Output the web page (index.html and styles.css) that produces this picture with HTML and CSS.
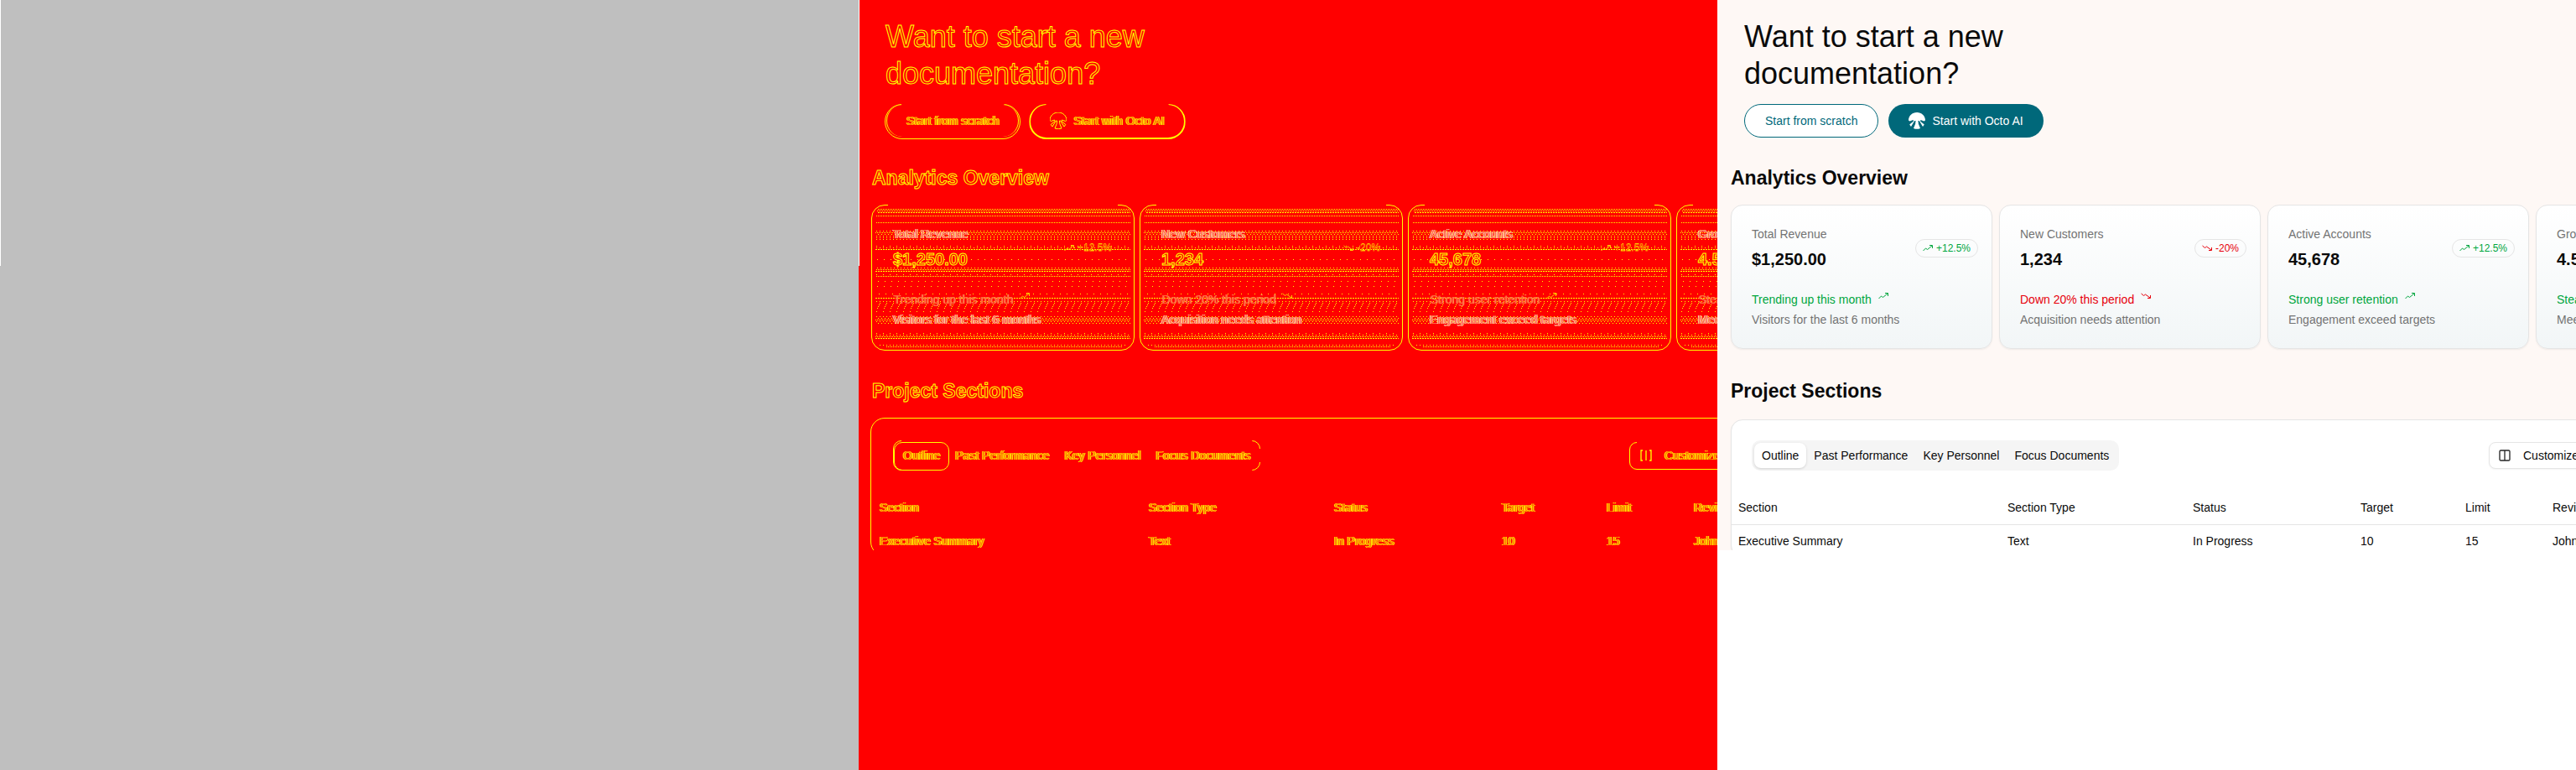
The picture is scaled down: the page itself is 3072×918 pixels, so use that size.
FILE: index.html
```
<!DOCTYPE html>
<html lang="en">
<head>
<meta charset="utf-8">
<title>Dashboard comparison</title>
<link rel="stylesheet" href="styles.css">
</head>
<body>
<svg class="defs" aria-hidden="true">
  <symbol id="up" viewBox="0 0 12 12"><path d="M.5 9 3.5 6 5.5 7.5 11 3M8 2.5h3.5V6"/></symbol>
  <symbol id="down" viewBox="0 0 12 12"><path d="M.5 3 3.5 5.500 5.500 4 11 8M8 8.500h3.500V5"/></symbol>
  <symbol id="octo" viewBox="0 0 20 20"><path d="M0 9.500C0 4 4.500 0 10 0s10 4 10 9.500L18.500 10.500 14.500 9 14 10.500 18.800 14.500 17 17 12.800 10h-1.300l.3 3.500 2.200 5.500a10 10 0 0 1-8 0l2.200-5.500.3-3.500H7.200L3 17l-1.800-2.500L6 10.500 5.500 9l-4 1.500z"/></symbol>
  <symbol id="columns" viewBox="0 0 24 24"><rect x="3" y="3" width="18" height="18" rx="2"/><path d="M12 3v18"/></symbol>
  <symbol id="brackets" viewBox="0 0 24 24"><path d="M6 3H3v18h3M12 3v18M18 3h3v18h-3"/></symbol>
  <symbol id="scan">
    <g class="fine">
      <line x1="6" x2="99%" y1="5.5" y2="5.5"/><line x1="5" x2="99%" y1="7.5" y2="7.5"/><line x1="4" x2="99%" y1="13.5" y2="13.5"/><line x1="4" x2="99%" y1="21.500" y2="21.500"/>
      <line x1="3" x2="99%" y1="33.500" y2="33.500"/>
      <line x1="4" x2="99%" y1="77.500" y2="77.500"/><line x1="4" x2="99%" y1="85.500" y2="85.500"/>
      <line x1="3" x2="99%" y1="137.500" y2="137.500"/>
      <line x1="3" x2="99%" y1="157.500" y2="157.500"/><line x1="16" x2="96%" y1="169.500" y2="169.500"/>
    </g>
    <g class="dash">
      <line x1="6" x2="99%" y1="9.500" y2="9.500"/><line x1="3" x2="99%" y1="53.500" y2="53.500"/><line x1="3" x2="99%" y1="79.500" y2="79.500"/><line x1="3" x2="99%" y1="111.500" y2="111.500"/><line x1="3" x2="99%" y1="159.500" y2="159.500"/>
    </g>
    <g class="mid">
      <line x1="4" x2="99%" y1="31.500" y2="31.500"/><line x1="6" x2="99%" y1="35.500" y2="35.500"/><line x1="4" x2="99%" y1="37.500" y2="37.500"/><line x1="4" x2="99%" y1="39.500" y2="39.500"/><line x1="4" x2="99%" y1="51.500" y2="51.500"/><line x1="5" x2="99%" y1="75.500" y2="75.500"/><line x1="4" x2="99%" y1="41.500" y2="41.500"/>
      <line x1="4" x2="99%" y1="133.500" y2="133.500"/><line x1="6" x2="99%" y1="135.500" y2="135.500"/><line x1="4" x2="99%" y1="139.500" y2="139.500"/><line x1="6" x2="99%" y1="141.500" y2="141.500"/><line x1="4" x2="99%" y1="155.500" y2="155.500"/><line x1="8" x2="98%" y1="167.500" y2="167.500"/><line x1="4" x2="99%" y1="115.500" y2="115.500"/>
    </g>
    <g class="sparse">
      <line x1="4" x2="99%" y1="49.500" y2="49.500"/><line x1="5" x2="99%" y1="65.500" y2="65.500"/><line x1="4" x2="99%" y1="83.500" y2="83.500"/><line x1="6" x2="99%" y1="91.500" y2="91.500"/><line x1="5" x2="99%" y1="97.500" y2="97.500"/><line x1="7" x2="99%" y1="106.500" y2="106.500"/>
      <line x1="8" x2="99%" y1="117.500" y2="117.500"/><line x1="7" x2="99%" y1="119.500" y2="119.500"/><line x1="6" x2="99%" y1="121.500" y2="121.500"/><line x1="5" x2="99%" y1="123.500" y2="123.500"/><line x1="4" x2="99%" y1="127.500" y2="127.500"/><line x1="4" x2="99%" y1="153.500" y2="153.500"/>
    </g>
  </symbol>
</svg>

<main class="compare">
  <section class="pane pane-before" aria-label="Before"></section>

  <section class="pane pane-diff" aria-label="Difference">
    <div class="app">
      <header class="hero">
        <h1>Want to start a new documentation?</h1>
        <div class="hero-actions">
          <button class="pill pill-outline" type="button">Start from scratch</button>
          <button class="pill pill-solid" type="button"><svg class="octo"><use href="#octo"/></svg>Start with Octo AI</button>
        </div>
      </header>
      <h2>Analytics Overview</h2>
      <div class="cards">
        <article class="card"><svg class="scan"><use href="#scan"/></svg>
          <div class="card-head"><div><p class="muted">Total Revenue</p><p class="value">$1,250.00</p></div><span class="badge up"><svg class="trend"><use href="#up"/></svg>+12.5%</span></div>
          <p class="note up">Trending up this month<svg class="trend"><use href="#up"/></svg></p><p class="muted">Visitors for the last 6 months</p>
        </article>
        <article class="card"><svg class="scan"><use href="#scan"/></svg>
          <div class="card-head"><div><p class="muted">New Customers</p><p class="value">1,234</p></div><span class="badge down"><svg class="trend"><use href="#down"/></svg>-20%</span></div>
          <p class="note down">Down 20% this period<svg class="trend"><use href="#down"/></svg></p><p class="muted">Acquisition needs attention</p>
        </article>
        <article class="card"><svg class="scan"><use href="#scan"/></svg>
          <div class="card-head"><div><p class="muted">Active Accounts</p><p class="value">45,678</p></div><span class="badge up"><svg class="trend"><use href="#up"/></svg>+12.5%</span></div>
          <p class="note up">Strong user retention<svg class="trend"><use href="#up"/></svg></p><p class="muted">Engagement exceed targets</p>
        </article>
        <article class="card"><svg class="scan"><use href="#scan"/></svg>
          <div class="card-head"><div><p class="muted">Growth Rate</p><p class="value">4.5%</p></div><span class="badge up"><svg class="trend"><use href="#up"/></svg>+4.5%</span></div>
          <p class="note up">Steady performance<svg class="trend"><use href="#up"/></svg></p><p class="muted">Meets growth projections</p>
        </article>
      </div>
      <h2 class="later">Project Sections</h2>
      <div class="panel">
        <div class="toolbar">
          <div class="tabs"><button class="tab active" type="button">Outline</button><button class="tab" type="button">Past Performance</button><button class="tab" type="button">Key Personnel</button><button class="tab" type="button">Focus Documents</button></div>
          <div class="tools"><button class="tool" type="button"><svg class="cols"><use href="#brackets"/></svg>Customize Columns</button></div>
        </div>
        <table>
          <colgroup><col class="c1"><col class="c2"><col class="c3"><col class="c4"><col class="c5"><col></colgroup>
          <thead><tr><th>Section</th><th>Section Type</th><th>Status</th><th>Target</th><th>Limit</th><th>Reviewer</th></tr></thead>
          <tbody><tr><td>Executive Summary</td><td>Text</td><td>In Progress</td><td>10</td><td>15</td><td>John Doe</td></tr></tbody>
        </table>
      </div>
    </div>
  </section>

  <section class="pane pane-after" aria-label="After">
    <div class="app">
      <header class="hero">
        <h1>Want to start a new documentation?</h1>
        <div class="hero-actions">
          <button class="pill pill-outline" type="button">Start from scratch</button>
          <button class="pill pill-solid" type="button"><svg class="octo"><use href="#octo"/></svg>Start with Octo AI</button>
        </div>
      </header>
      <h2>Analytics Overview</h2>
      <div class="cards">
        <article class="card">
          <div class="card-head"><div><p class="muted">Total Revenue</p><p class="value">$1,250.00</p></div><span class="badge up"><svg class="trend"><use href="#up"/></svg>+12.5%</span></div>
          <p class="note up">Trending up this month<svg class="trend"><use href="#up"/></svg></p><p class="muted">Visitors for the last 6 months</p>
        </article>
        <article class="card">
          <div class="card-head"><div><p class="muted">New Customers</p><p class="value">1,234</p></div><span class="badge down"><svg class="trend"><use href="#down"/></svg>-20%</span></div>
          <p class="note down">Down 20% this period<svg class="trend"><use href="#down"/></svg></p><p class="muted">Acquisition needs attention</p>
        </article>
        <article class="card">
          <div class="card-head"><div><p class="muted">Active Accounts</p><p class="value">45,678</p></div><span class="badge up"><svg class="trend"><use href="#up"/></svg>+12.5%</span></div>
          <p class="note up">Strong user retention<svg class="trend"><use href="#up"/></svg></p><p class="muted">Engagement exceed targets</p>
        </article>
        <article class="card">
          <div class="card-head"><div><p class="muted">Growth Rate</p><p class="value">4.5%</p></div><span class="badge up"><svg class="trend"><use href="#up"/></svg>+4.5%</span></div>
          <p class="note up">Steady performance<svg class="trend"><use href="#up"/></svg></p><p class="muted">Meets growth projections</p>
        </article>
      </div>
      <h2 class="later">Project Sections</h2>
      <div class="panel">
        <div class="toolbar">
          <div class="tabs"><button class="tab active" type="button">Outline</button><button class="tab" type="button">Past Performance</button><button class="tab" type="button">Key Personnel</button><button class="tab" type="button">Focus Documents</button></div>
          <div class="tools"><button class="tool" type="button"><svg class="cols"><use href="#columns"/></svg>Customize Columns</button></div>
        </div>
        <table>
          <colgroup><col class="c1"><col class="c2"><col class="c3"><col class="c4"><col class="c5"><col></colgroup>
          <thead><tr><th>Section</th><th>Section Type</th><th>Status</th><th>Target</th><th>Limit</th><th>Reviewer</th></tr></thead>
          <tbody><tr><td>Executive Summary</td><td>Text</td><td>In Progress</td><td>10</td><td>15</td><td>John Doe</td></tr></tbody>
        </table>
      </div>
    </div>
  </section>
</main>
</body>
</html>
```
FILE: styles.css
```
* { box-sizing: border-box; }
body { margin: 0; font: 14px/20px "Liberation Sans", Arial, sans-serif; color: #0a0a0a; background: #fff; }
h1, h2, p { margin: 0; }
button { font: inherit; color: inherit; text-shadow: inherit; margin: 0; white-space: nowrap; }
svg { flex: none; }
.defs { position: absolute; width: 0; height: 0; }

/* Three equal panes side by side */
.compare { display: grid; grid-template-columns: repeat(3, minmax(0, 1fr)); min-height: 100vh; }
.pane { position: relative; overflow: hidden; }
.pane-before { background: #bfbfbf; }
.pane-diff { background: #f00; }
.pane-before::before, .pane-diff::before { content: ""; position: absolute; left: 0; top: 0; width: 1px; height: 317px; background: #fff; }

/* Dashboard, cut off at the fold */
.app { max-height: 656px; overflow: hidden; padding: 22px 16px 0; background: #fef8f5; }
.hero { padding: 0 16px; }
h1 { max-width: 340px; font-size: 36px; line-height: 44px; font-weight: 400; }
.hero-actions { display: flex; gap: 12px; margin-top: 14px; }
.pill { position: relative; display: flex; align-items: center; gap: 8px; height: 40px; padding: 0 24px; border: 1px solid #00687a; border-radius: 20px; }
.pill-outline { background: #fff; color: #00687a; }
.pill-solid { border: 0; background: #00687a; color: #fff; }
.octo { width: 20px; height: 20px; fill: #fff; }
h2 { margin: 32px 0 16px; font-size: 23px; line-height: 32px; font-weight: 700; }
h2.later { margin: 34px 0 18px; }

.cards { display: grid; grid-template-columns: repeat(4, 312px); gap: 8px; }
.card { position: relative; padding: 24px; border: 1px solid #e5e5e5; border-radius: 14px; background: linear-gradient(#fff, #f2f6f7); box-shadow: 0 1px 2px rgba(0, 0, 0, .06); }
.card-head { display: flex; align-items: center; justify-content: space-between; margin: 0 -8px 24px 0; }
.muted { color: #737373; }
.value { margin-top: 6px; font-size: 20px; line-height: 28px; font-weight: 700; }
.badge { display: flex; align-items: center; gap: 4px; height: 22px; padding: 0 8px; border: 1px solid #e5e5e5; border-radius: 11px; font-size: 12px; line-height: 16px; }
.trend { width: 12px; height: 12px; fill: none; stroke: currentColor; stroke-width: 1; }
.note { display: flex; gap: 8px; margin-bottom: 4px; }
.up { color: #00a63e; }
.down { color: #e7000b; }

.panel { position: relative; width: 1272px; border: 1px solid #e5e5e5; border-radius: 14px; background: #fff; box-shadow: 0 1px 2px rgba(0, 0, 0, .06); }
.toolbar { display: flex; align-items: center; justify-content: space-between; padding: 24px; }
.tabs { position: relative; display: flex; height: 36px; padding: 3px; border-radius: 10px; background: #f5f5f5; }
.tab { position: relative; padding: 0 8px; border: 1px solid transparent; border-radius: 8px; background: none; }
.tab.active { background: #fff; box-shadow: 0 1px 3px rgba(0, 0, 0, .15); }
.tools { width: 343px; }
.tool { position: relative; display: flex; align-items: center; gap: 14px; height: 32px; padding: 0 10px; border: 1px solid #e5e5e5; border-radius: 8px; background: #fff; box-shadow: 0 1px 2px rgba(0, 0, 0, .05); }
.cols { width: 16px; height: 16px; fill: none; stroke: #262626; stroke-width: 2; }
table { width: 100%; border-collapse: separate; border-spacing: 0; table-layout: fixed; }
.c1 { width: 321px; }
.c2 { width: 221px; }
.c3 { width: 200px; }
.c4 { width: 125px; }
.c5 { width: 104px; }
th, td { padding: 8px; text-align: left; font-weight: 400; }
th { height: 41px; padding: 0 8px; border-bottom: 1px solid #e5e5e5; }
td { height: 37px; }

/* Edge view: yellow contours on red */
.pane-diff .app { background: #f00; color: #f70; text-shadow: -1px 0 #ff0, 1px 0 #ff0; }
.pane-diff h1, .pane-diff h2, .pane-diff .value { color: #f00; -webkit-text-stroke: 1px #ff0; text-shadow: none; }
.pane-diff .pill { border: 1px solid transparent; background: none; color: #f70; }
.pane-diff .pill-solid { padding: 0 23px; }
.pane-diff .pill::before { content: ""; position: absolute; inset: -1px -2px -3px; border: 1px solid #ff0; border-radius: 21px; }
.pane-diff .pill-solid::before { border-width: 1px 2px 2px; }
.pane-diff .pill-outline::after { content: ""; position: absolute; inset: 0; border: 1px solid #ff0; border-width: 0 1px; border-radius: 19px; }
.pane-diff .pill::before, .pane-diff .card::before { clip-path: polygon(0 0, 20px 0, 20px 4px, calc(100% - 20px) 4px, calc(100% - 20px) 0, 100% 0, 100% 100%, 0 100%); }
.pane-diff .octo { fill: none; stroke: #ff0; stroke-width: 1; overflow: visible; }
.pane-diff .card { border-color: transparent; background: none; box-shadow: none; }
.pane-diff .card::before { content: ""; position: absolute; inset: -1px -2px -3px; border: 1px solid #ff0; border-radius: 16px; }
.scan { position: absolute; left: 0; top: -1px; width: 100%; height: 172px; stroke: #ff0; shape-rendering: crispEdges; }
.fine { stroke-dasharray: 1 1; }
.dash { stroke-dasharray: 2 1; }
.mid { stroke-dasharray: 1 3; }
.sparse { stroke-dasharray: 1 7; }
.pane-diff .card-head, .pane-diff .note, .pane-diff .muted { position: relative; }
.pane-diff .muted { color: #f64; text-shadow: -1px 0 #fda, 1px 0 #fcb; }
.pane-diff .note { color: #f63; text-shadow: 1px 0 #f86; }
.pane-diff .badge { border-color: transparent; color: #f60; text-shadow: 0 -1px #fc0; }
.pane-diff .trend { stroke: #fc0; }
.pane-diff .panel { border-color: transparent; background: none; box-shadow: none; }
.pane-diff .panel::before { content: ""; position: absolute; inset: -3px -3px 0; border: 1px solid #ff0; border-radius: 17px; }
.pane-diff .tabs { background: none; }
.pane-diff .tabs::before { content: ""; position: absolute; inset: 0; border: 1px solid #ff0; border-radius: 10px; clip-path: polygon(0 0, 10px 0, 10px 100%, 0 100%, 0 0, 100% 0, 100% 10px, calc(100% - 10px) 10px, calc(100% - 10px) calc(100% - 10px), 100% calc(100% - 10px), 100% 100%, calc(100% - 10px) 100%, calc(100% - 10px) 0); }
.pane-diff .tab.active { background: none; box-shadow: none; }
.pane-diff .tab.active::before { content: ""; position: absolute; inset: -2px -3px -4px; border: 1px solid #ff0; border-radius: 10px; }
.pane-diff .tool { border-color: transparent; background: none; box-shadow: none; }
.pane-diff .tool::before { content: ""; position: absolute; inset: -1px -2px -2px; border: 1px solid #ff0; border-radius: 9px; clip-path: polygon(0 0, 9px 0, 9px 2px, 100% 2px, 100% 100%, 0 100%); }
.pane-diff .cols { stroke: #ff0; }
.pane-diff th { border-color: transparent; }
```
